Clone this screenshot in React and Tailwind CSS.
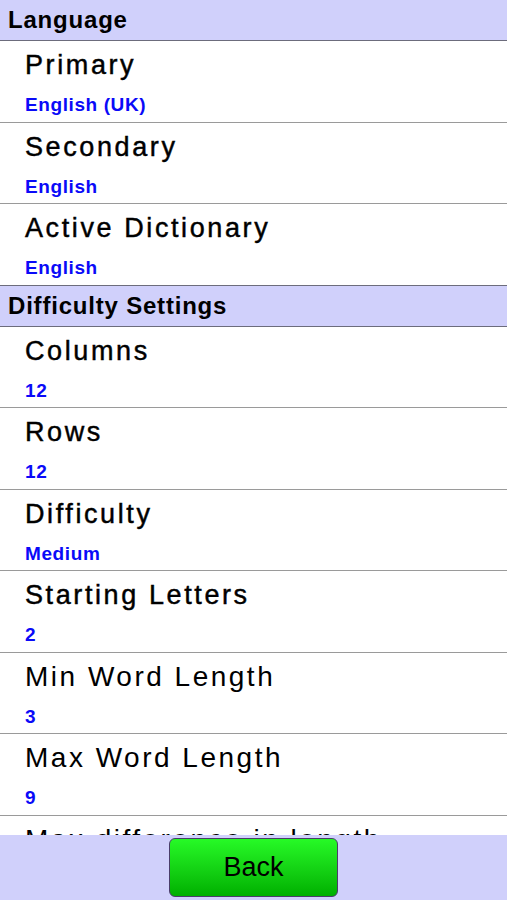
import React from "react";

const sections = [
  {
    title: "Language",
    items: [
      { label: "Primary", value: "English (UK)" },
      { label: "Secondary", value: "English" },
      { label: "Active Dictionary", value: "English" },
    ],
  },
  {
    title: "Difficulty Settings",
    items: [
      { label: "Columns", value: "12" },
      { label: "Rows", value: "12" },
      { label: "Difficulty", value: "Medium" },
      { label: "Starting Letters", value: "2" },
      { label: "Min Word Length", value: "3", thin: true },
      { label: "Max Word Length", value: "9", thin: true },
      { label: "Max difference in length", thin: true },
    ],
  },
];

const SettingRow = ({ label, value, thin, last }) => (
  <div
    className={`h-[81.5px] shrink-0 border-b pl-[25px] pt-[9px] ${
      last ? "border-[#6c6c7c]" : "border-[#9a9a9a]"
    }`}
  >
    <div
      className={`leading-[30px] text-black whitespace-nowrap ${
        thin
          ? "text-[28px] tracking-[2.5px]"
          : "text-[27px] tracking-[2.6px] [-webkit-text-stroke:0.45px_black]"
      }`}
    >
      {label}
    </div>
    {value && (
      <div className="mt-[14px] text-[19px] leading-[22px] font-bold tracking-[0.6px] text-[#0a0af8]">
        {value}
      </div>
    )}
  </div>
);

const App = () => {
  return (
    <div className="h-[900px] w-full flex flex-col bg-white overflow-hidden font-['Liberation_Sans',Arial,sans-serif]">
      <div className="flex-1 min-h-0 overflow-hidden flex flex-col">
        {sections.map((section) => (
          <div key={section.title} className="flex flex-col shrink-0">
            <div className="h-[41px] shrink-0 bg-[#d0d0fb] border-b border-[#6c6c7c] pl-[8px] flex items-center text-[24px] font-bold tracking-[0.8px] text-black">
              {section.title}
            </div>
            {section.items.map((item, i) => (
              <SettingRow
                key={item.label}
                {...item}
                last={i === section.items.length - 1}
              />
            ))}
          </div>
        ))}
      </div>

      <div className="h-[65px] shrink-0 bg-[#d0d0fb] flex items-center justify-center">
        <button className="w-[169px] h-[59px] rounded-[6px] border border-[#4b3d6b] bg-linear-to-b from-[#26fa26] to-[#00b000] text-[27px] text-black">
          Back
        </button>
      </div>
    </div>
  );
};

export default App;
